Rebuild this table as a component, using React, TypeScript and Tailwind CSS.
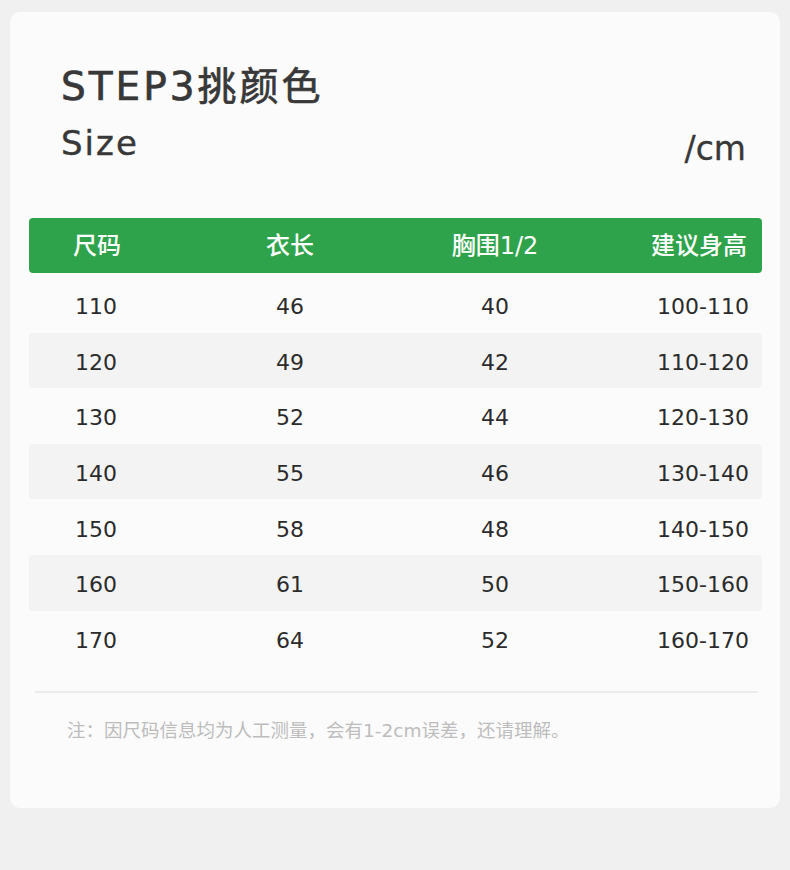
const rows = [
  ['110', '46', '40', '100-110'],
  ['120', '49', '42', '110-120'],
  ['130', '52', '44', '120-130'],
  ['140', '55', '46', '130-140'],
  ['150', '58', '48', '140-150'],
  ['160', '61', '50', '150-160'],
  ['170', '64', '52', '160-170'],
];

const font = { fontFamily: '"DejaVu Sans", "Noto Sans CJK SC", sans-serif' };

export default function App() {
  return (
    <div className="min-h-[870px] w-[790px] bg-[#f0f0f0] pt-[12px] pl-[10px]" style={font}>
      <div className="w-[770px] h-[796px] bg-[#fbfbfb] rounded-[10px] pt-[50px]">
        <div className="px-[51px] text-[#383838]">
          <div className="text-[39px] leading-[50px] tracking-[3px] [-webkit-text-stroke:0.7px_#383838]">STEP3挑颜色</div>
          <div className="flex items-end justify-between mt-[11px]">
            <div className="text-[34px] leading-[40px] tracking-[2px] [-webkit-text-stroke:0.4px_#383838]">Size</div>
            <div className="text-[33px] leading-[40px] -mb-[6px] -mr-[17px] [-webkit-text-stroke:0.3px_#383838]">/cm</div>
          </div>
        </div>

        <div className="mt-[55px] ml-[19px] w-[733px]">
          <div className="flex items-center h-[55px] bg-[#2fa34b] rounded-[4px] text-white text-[24px] font-medium">
            <div className="w-[190px] pl-[44px]">尺码</div>
            <div className="w-[142px] text-center">衣长</div>
            <div className="w-[268px] text-center">胸围1/2</div>
            <div className="flex-1 text-right pr-[15px]">建议身高</div>
          </div>
          <div className="mt-[4px]">
            {rows.map((r, i) => (
              <div
                key={i}
                className={`flex items-center h-[55.6px] pt-[4px] text-[22px] text-[#2b2b2b] rounded-[4px] ${i % 2 === 1 ? 'bg-[#f3f3f3]' : ''}`}
              >
                <div className="w-[190px] pl-[46px]">{r[0]}</div>
                <div className="w-[142px] text-center">{r[1]}</div>
                <div className="w-[268px] text-center">{r[2]}</div>
                <div className="flex-1 text-right pr-[13px]">{r[3]}</div>
              </div>
            ))}
          </div>
        </div>

        <div className="ml-[25px] mr-[22px] mt-[25px] h-[2px] bg-[#ececec]" />
        <div className="pl-[57px] mt-[24px] text-[18.5px] text-[#bdbdbd]">
          注：因尺码信息均为人工测量，会有1-2cm误差，还请理解。
        </div>
      </div>
    </div>
  );
}
